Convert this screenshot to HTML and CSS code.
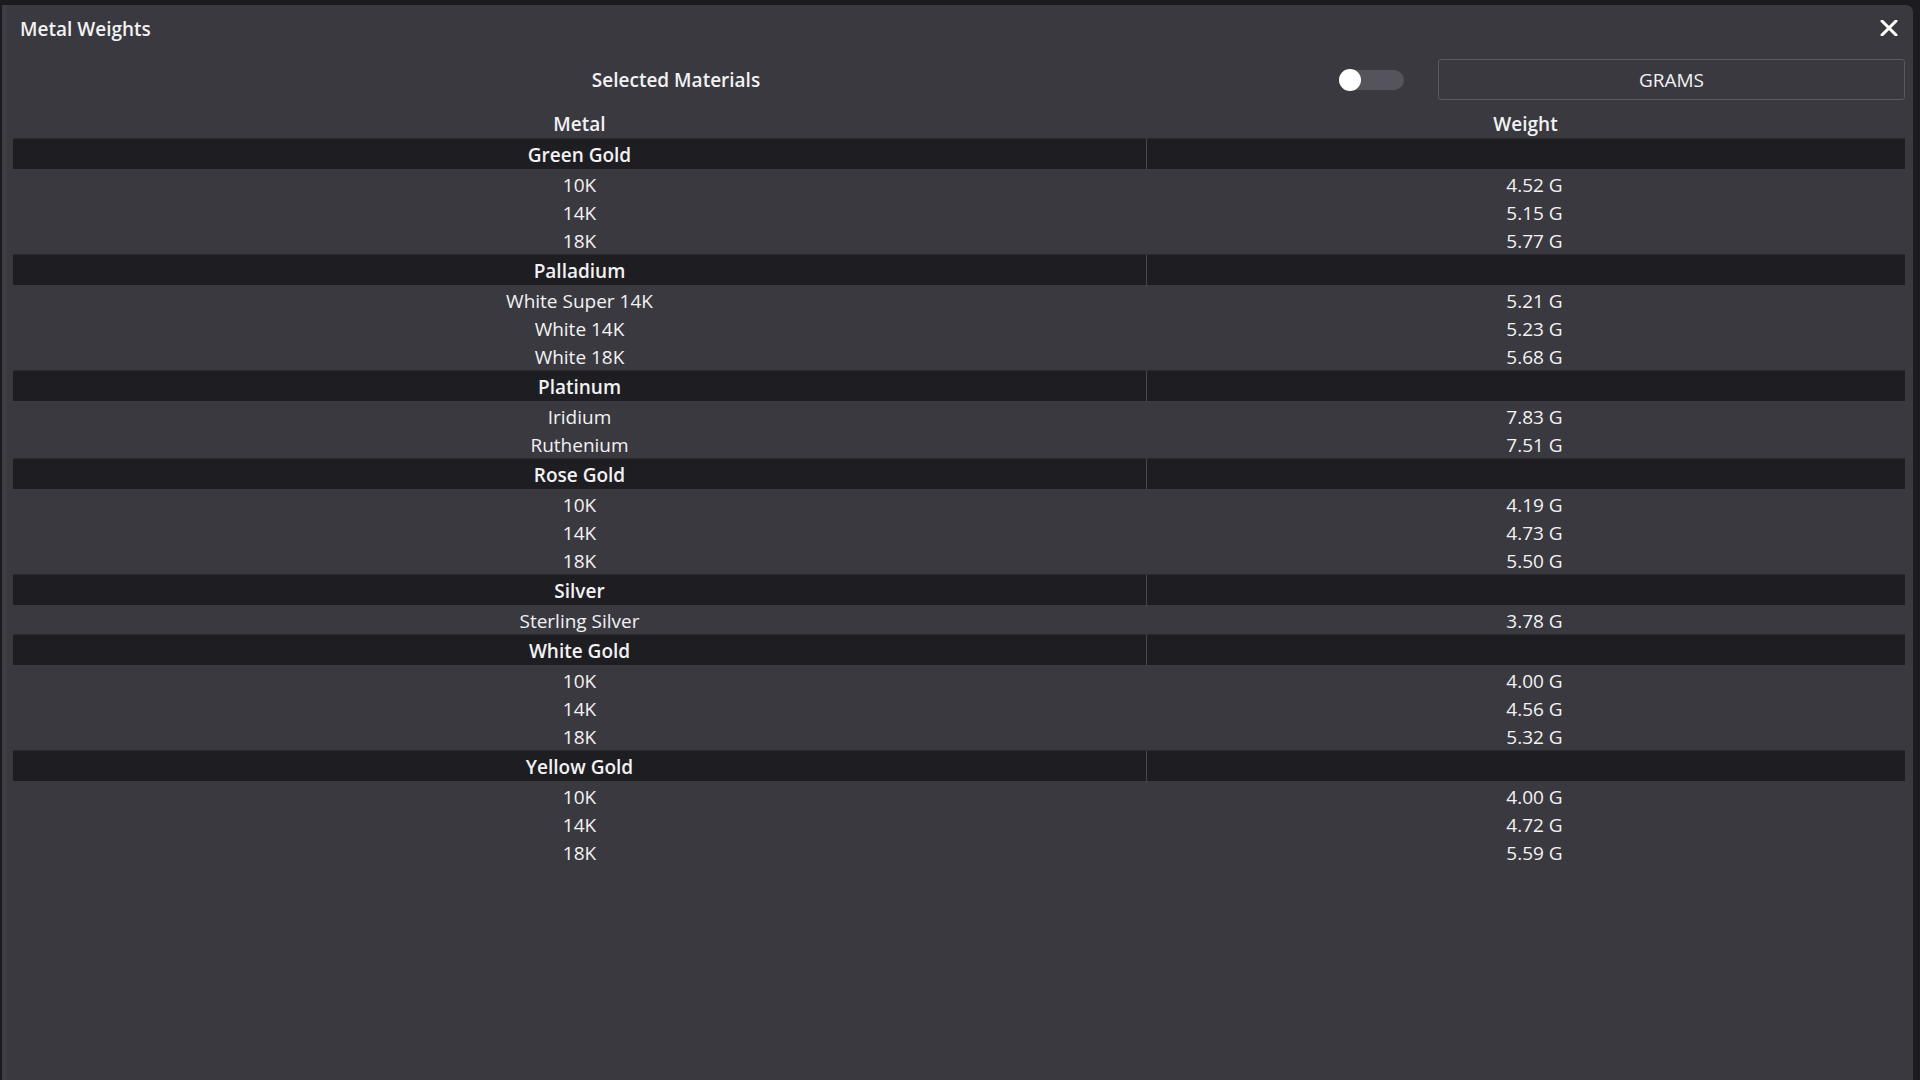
FILE: index.html
```html
<!DOCTYPE html>
<html lang="en">
<head>
<meta charset="utf-8">
<title>Metal Weights</title>
<link rel="stylesheet" href="styles.css">
</head>
<body>
<div class="window">
  <div class="titlebar">
    <span class="title">Metal Weights</span>
    <button class="close" aria-label="Close">
      <svg width="18" height="16" viewBox="0 0 18 16"><path d="M2 1 L16 15 M16 1 L2 15" stroke="#ffffff" stroke-width="3" stroke-linecap="round"/></svg>
    </button>
  </div>

  <div class="controls">
    <span class="controls-label">Selected Materials</span>
    <span class="toggle"><span class="knob"></span></span>
    <button class="unit-btn">GRAMS</button>
  </div>

  <table class="weights">
    <thead>
      <tr><th class="col-metal">Metal</th><th class="col-weight">Weight</th></tr>
    </thead>
    <tbody>
      <tr class="group"><td>Green Gold</td><td class="empty"></td></tr>
      <tr><td>10K</td><td class="val">4.52 G</td></tr>
      <tr><td>14K</td><td class="val">5.15 G</td></tr>
      <tr><td>18K</td><td class="val">5.77 G</td></tr>
      <tr class="group"><td>Palladium</td><td class="empty"></td></tr>
      <tr><td>White Super 14K</td><td class="val">5.21 G</td></tr>
      <tr><td>White 14K</td><td class="val">5.23 G</td></tr>
      <tr><td>White 18K</td><td class="val">5.68 G</td></tr>
      <tr class="group"><td>Platinum</td><td class="empty"></td></tr>
      <tr><td>Iridium</td><td class="val">7.83 G</td></tr>
      <tr><td>Ruthenium</td><td class="val">7.51 G</td></tr>
      <tr class="group"><td>Rose Gold</td><td class="empty"></td></tr>
      <tr><td>10K</td><td class="val">4.19 G</td></tr>
      <tr><td>14K</td><td class="val">4.73 G</td></tr>
      <tr><td>18K</td><td class="val">5.50 G</td></tr>
      <tr class="group"><td>Silver</td><td class="empty"></td></tr>
      <tr><td>Sterling Silver</td><td class="val">3.78 G</td></tr>
      <tr class="group"><td>White Gold</td><td class="empty"></td></tr>
      <tr><td>10K</td><td class="val">4.00 G</td></tr>
      <tr><td>14K</td><td class="val">4.56 G</td></tr>
      <tr><td>18K</td><td class="val">5.32 G</td></tr>
      <tr class="group"><td>Yellow Gold</td><td class="empty"></td></tr>
      <tr><td>10K</td><td class="val">4.00 G</td></tr>
      <tr><td>14K</td><td class="val">4.72 G</td></tr>
      <tr><td>18K</td><td class="val">5.59 G</td></tr>
    </tbody>
  </table>
</div>
</body>
</html>
```

FILE: styles.css
```css
* { box-sizing: border-box; }

html, body {
  margin: 0;
  height: 100%;
  background: #1c1b20;
}

body {
  padding: 5px 7px 0 2px;
  font-family: "Open Sans", "Liberation Sans", sans-serif;
  color: #f2f2f4;
  overflow: hidden;
}

.window {
  height: 1075px;
  background: #3a3940;
  border-left: 5px solid #3e3d44;
  border-radius: 0 7px 0 0;
  padding: 0 8px 0 6px;
  display: flex;
  flex-direction: column;
}

/* title bar */
.titlebar {
  height: 46px;
  display: flex;
  align-items: center;
  justify-content: space-between;
}

.title {
  font-size: 19px;
  font-weight: 600;
  padding-left: 7px;
  padding-top: 1px;
}

.close {
  background: none;
  border: none;
  padding: 0;
  margin-right: 5px;
  width: 22px;
  height: 22px;
  display: flex;
  align-items: center;
  justify-content: center;
  cursor: pointer;
}

/* unit controls */
.controls {
  display: flex;
  align-items: center;
  height: 41px;
  margin-top: 8px;
}

.controls-label {
  flex: 1;
  text-align: center;
  font-size: 19px;
  font-weight: 600;
}

.toggle {
  position: relative;
  width: 65px;
  height: 20px;
  border-radius: 10px;
  background: #55545d;
  margin-right: 34px;
}

.knob {
  position: absolute;
  left: 0;
  top: -1px;
  width: 22px;
  height: 22px;
  border-radius: 50%;
  background: #ffffff;
}

.unit-btn {
  width: 467px;
  height: 41px;
  background: #3a3940;
  border: 1px solid #5a5961;
  border-radius: 3px;
  color: #f2f2f4;
  font-family: inherit;
  font-size: 19px;
  font-weight: 500;
}

/* weights table */
.weights {
  width: 100%;
  border-collapse: separate;
  border-spacing: 0;
  margin-top: 11px;
  font-size: 19px;
  line-height: 1;
}

.weights th {
  height: 27px;
  font-weight: 600;
  text-align: center;
  padding: 0;
}

.col-metal { width: 1133px; }

.weights td {
  height: 28px;
  padding: 2px 0 0;
  text-align: center;
  font-weight: 500;
}

.weights td.val {
  padding-left: 18px;
}

.weights tr.group td {
  height: 32px;
  background: #1e1d22;
  border-top: 1px solid #2a292f;
  border-bottom: 1px solid #3a3940;
  font-weight: 600;
}

.weights tr.group td.empty {
  border-left: 1px solid #4a4950;
}
```
